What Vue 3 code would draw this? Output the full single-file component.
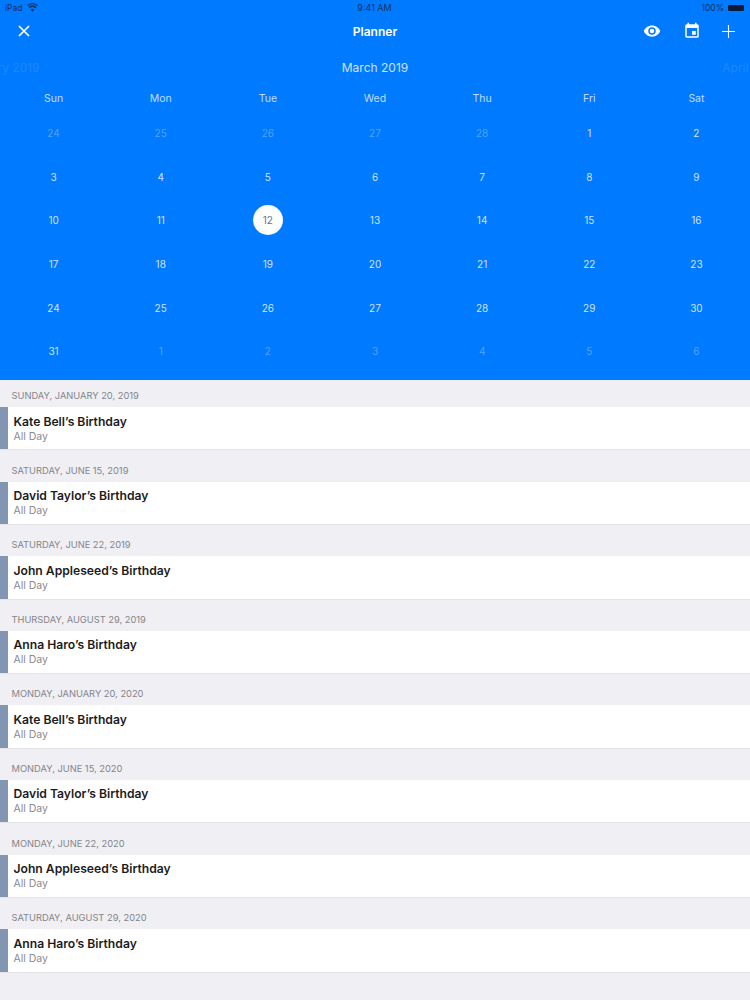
<script setup>
const weekdays = ['Sun', 'Mon', 'Tue', 'Wed', 'Thu', 'Fri', 'Sat']

const days = [
  [24, 25, 26, 27, 28, 1, 2],
  [3, 4, 5, 6, 7, 8, 9],
  [10, 11, 12, 13, 14, 15, 16],
  [17, 18, 19, 20, 21, 22, 23],
  [24, 25, 26, 27, 28, 29, 30],
  [31, 1, 2, 3, 4, 5, 6]
]

// leading and trailing days belong to other months
const isOutside = (week, i) => (week === 0 && i < 5) || (week === 5 && i > 0)

const events = [
  { date: 'Sunday, January 20, 2019', title: 'Kate Bell’s Birthday' },
  { date: 'Saturday, June 15, 2019', title: 'David Taylor’s Birthday' },
  { date: 'Saturday, June 22, 2019', title: 'John Appleseed’s Birthday' },
  { date: 'Thursday, August 29, 2019', title: 'Anna Haro’s Birthday' },
  { date: 'Monday, January 20, 2020', title: 'Kate Bell’s Birthday' },
  { date: 'Monday, June 15, 2020', title: 'David Taylor’s Birthday' },
  { date: 'Monday, June 22, 2020', title: 'John Appleseed’s Birthday' },
  { date: 'Saturday, August 29, 2020', title: 'Anna Haro’s Birthday' }
]
</script>

<template>
  <div class="planner">
    <header class="top">
      <div class="status-bar">
        <div class="status-left">
          <span>iPad</span>
          <svg width="11" height="9" viewBox="0 0 24 18">
            <path fill="#12325f" d="M12 18 8.2 13.6a5.6 5.6 0 0 1 7.6 0zM5.8 10.8 3.4 8a13 13 0 0 1 17.2 0l-2.4 2.8a9.4 9.4 0 0 0-12.4 0zM1.7 6 0 4a18.4 18.4 0 0 1 24 0l-1.7 2a15.8 15.8 0 0 0-20.6 0z"/>
          </svg>
        </div>
        <span class="status-time">9:41 AM</span>
        <div class="status-right">
          <span>100%</span>
          <span class="battery"></span>
        </div>
      </div>

      <nav class="nav">
        <button class="nav-btn close-btn" aria-label="Close">
          <svg width="12" height="12" viewBox="0 0 12 12">
            <path d="M1 1l10 10M11 1 1 11" stroke="#fff" stroke-width="1.7" fill="none"/>
          </svg>
        </button>
        <div class="nav-title">Planner</div>
        <div class="nav-actions">
          <button class="nav-btn" aria-label="Preview">
            <svg width="18" height="18" viewBox="0 0 24 24">
              <path fill="#fff" d="M12 4.5C7 4.5 2.73 7.61 1 12c1.73 4.39 6 7.5 11 7.5s9.27-3.11 11-7.5c-1.73-4.39-6-7.5-11-7.5zM12 17a5 5 0 1 1 0-10 5 5 0 0 1 0 10zm0-8a3 3 0 1 0 0 6 3 3 0 0 0 0-6z"/>
            </svg>
          </button>
          <button class="nav-btn" aria-label="Calendar">
            <svg width="18" height="18" viewBox="0 0 24 24">
              <path fill="#fff" d="M17 12h-5v5h5v-5zM16 1v2H8V1H6v2H5a2 2 0 0 0-2 2v14a2 2 0 0 0 2 2h14a2 2 0 0 0 2-2V5a2 2 0 0 0-2-2h-1V1h-2zm3 18H5V8h14v11z"/>
            </svg>
          </button>
          <button class="nav-btn" aria-label="Add">
            <svg width="13" height="13" viewBox="0 0 13 13">
              <path d="M6.5 0v13M0 6.500h13" stroke="#fff" stroke-width="1.1" fill="none"/>
            </svg>
          </button>
        </div>
      </nav>

      <div class="months">
        <span class="month side prev">January 2019</span>
        <span class="month">March 2019</span>
        <span class="month side next">April 2019</span>
      </div>

      <div class="calendar">
        <div v-for="day in weekdays" :key="day" class="weekday">{{ day }}</div>
        <template v-for="(week, w) in days" :key="w">
          <div
            v-for="(d, i) in week"
            :key="i"
            :class="['day', { outside: isOutside(w, i) }]"
          >
            <span :class="{ today: w === 2 && d === 12 }">{{ d }}</span>
          </div>
        </template>
      </div>
    </header>

    <section class="list">
      <div v-for="(ev, idx) in events" :key="idx" class="group">
        <h4 class="date">{{ ev.date }}</h4>
        <div class="event">
          <span class="swatch"></span>
          <div class="event-text">
            <div class="event-title">{{ ev.title }}</div>
            <div class="event-sub">All Day</div>
          </div>
        </div>
      </div>
    </section>
  </div>
</template>

<style scoped>
.planner {
  width: 750px;
  height: 1000px;
  overflow: hidden;
  background: #efeff4;
  font-family: Inter, "Liberation Sans", sans-serif;
}

.top {
  height: 380px;
  background: #007aff;
  color: #fff;
  overflow: hidden;
}

.status-bar {
  height: 15px;
  display: grid;
  grid-template-columns: 1fr auto 1fr;
  align-items: center;
  padding: 0 6px 0 5px;
  font-size: 8.5px;
  color: #12325f;
}

.status-time {
  font-size: 9px;
}

.status-left {
  display: flex;
  align-items: center;
  gap: 5px;
}

.status-right {
  display: flex;
  align-items: center;
  justify-content: flex-end;
  gap: 4px;
}

.battery {
  width: 16px;
  height: 6px;
  border-radius: 1px;
  background: #0a1c38;
}

.nav {
  height: 32px;
  display: flex;
  align-items: center;
  justify-content: space-between;
  position: relative;
  padding: 0 15px 0 18px;
}

.nav-title {
  position: absolute;
  left: 0;
  right: 0;
  text-align: center;
  font-size: 12px;
  font-weight: 600;
}

.nav-btn {
  display: flex;
  align-items: center;
  justify-content: center;
  padding: 0;
  border: none;
  background: transparent;
}

.nav-actions {
  display: flex;
  align-items: center;
  gap: 21.5px;
  position: relative;
}

.months {
  height: 41px;
  display: grid;
  grid-template-columns: 1fr auto 1fr;
  align-items: center;
  font-size: 12px;
  color: rgba(255, 255, 255, 0.8);
}

.month {
  white-space: nowrap;
}

.month.side {
  color: rgba(255, 255, 255, 0.12);
}

.prev {
  margin-left: -37px;
}

.next {
  justify-self: end;
  margin-right: -29px;
}

.calendar {
  display: grid;
  grid-template-columns: repeat(7, 1fr);
  grid-template-rows: 21px repeat(6, 43.6px);
  font-size: 10px;
}

.weekday {
  display: flex;
  align-items: center;
  justify-content: center;
  color: rgba(255, 255, 255, 0.75);
  font-size: 10.5px;
}

.day {
  display: flex;
  align-items: center;
  justify-content: center;
  padding-top: 5px;
  color: rgba(255, 255, 255, 0.82);
}

.day.outside {
  color: rgba(255, 255, 255, 0.32);
}

.today {
  width: 30px;
  height: 30px;
  border-radius: 50%;
  background: #fff;
  color: #66748a;
  display: flex;
  align-items: center;
  justify-content: center;
}

.group {
  height: 74.6px;
}

.group:first-child {
  height: 70.4px;
}

.group:first-child .date {
  height: 27px;
}

.date {
  margin: 0;
  height: 31.2px;
  padding: 0 0 6px 11.5px;
  display: flex;
  align-items: flex-end;
  box-sizing: border-box;
  font-size: 9.3px;
  font-weight: 400;
  text-transform: uppercase;
  color: #85858a;
}

.event {
  height: 43.4px;
  display: flex;
  background: #fff;
  border-bottom: 1px solid #e4e4e8;
  box-sizing: border-box;
}

.swatch {
  width: 7.5px;
  background: #8296b4;
}

.event-text {
  padding: 6.5px 0 0 6px;
}

.event-title {
  font-size: 12.15px;
  line-height: 15px;
  font-weight: 600;
  color: #1c1c1e;
}

.event-sub {
  font-size: 10.5px;
  line-height: 15px;
  color: #8a8a8f;
}
</style>
